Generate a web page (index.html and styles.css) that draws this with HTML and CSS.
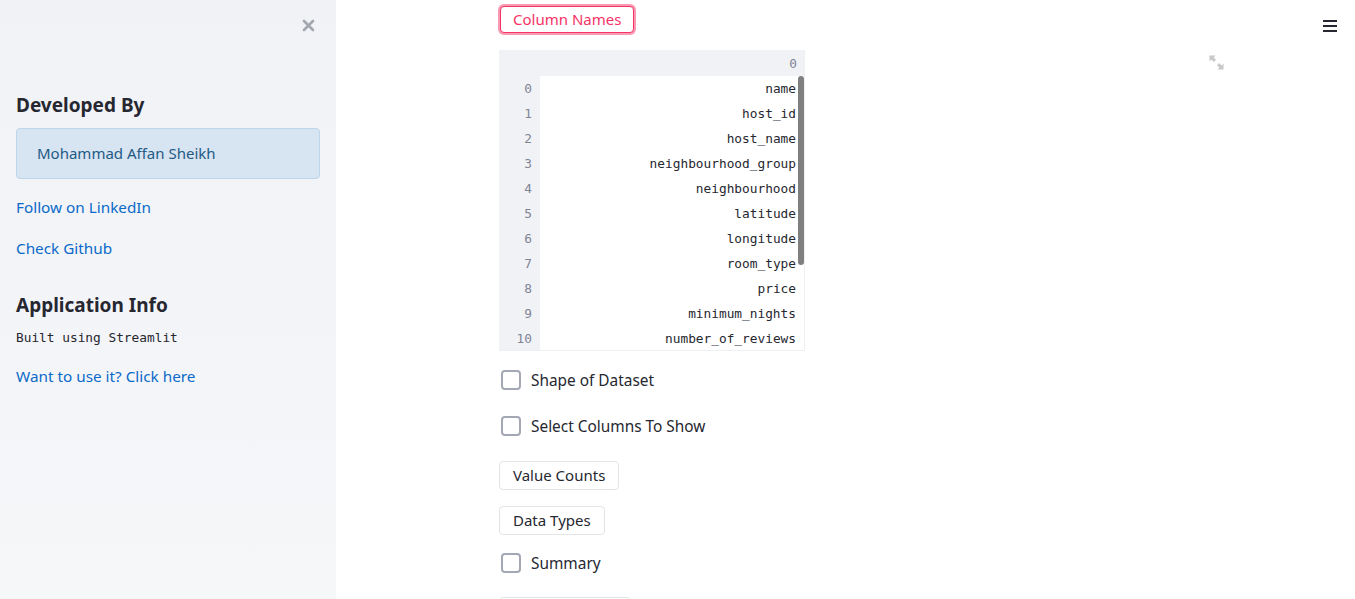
FILE: index.html
```html
<!DOCTYPE html>
<html>
<head>
<meta charset="utf-8">
<link rel="stylesheet" href="styles.css">
</head>
<body>
<div class="app">
  <aside class="sidebar">
    <div class="close-row">
      <svg class="close" width="13" height="13" viewBox="0 0 13 13"><path d="M2 2 L11 11 M11 2 L2 11" stroke="#a3a6ad" stroke-width="2.6" stroke-linecap="round"/></svg>
    </div>
    <h3 class="side-h">Developed By</h3>
    <div class="info">Mohammad Affan Sheikh</div>
    <a class="link l1" href="#">Follow on LinkedIn</a>
    <a class="link l2" href="#">Check Github</a>
    <h3 class="side-h h2">Application Info</h3>
    <div class="mono-line">Built using Streamlit</div>
    <a class="link l3" href="#">Want to use it? Click here</a>
  </aside>
  <main class="main">
    <div class="menu">
      <svg width="14" height="12" viewBox="0 0 14 12"><rect x="0" y="0" width="14" height="2" fill="#262730"/><rect x="0" y="5" width="14" height="2" fill="#262730"/><rect x="0" y="10" width="14" height="2" fill="#262730"/></svg>
    </div>
    <div class="block">
      <button class="btn btn-active">Column Names</button>
      <div class="table-wrap">
        <div class="table">
          <div class="hcell idx"></div><div class="hcell">0</div>
          <div class="idx">0</div><div class="cell">name</div>
          <div class="idx">1</div><div class="cell">host_id</div>
          <div class="idx">2</div><div class="cell">host_name</div>
          <div class="idx">3</div><div class="cell">neighbourhood_group</div>
          <div class="idx">4</div><div class="cell">neighbourhood</div>
          <div class="idx">5</div><div class="cell">latitude</div>
          <div class="idx">6</div><div class="cell">longitude</div>
          <div class="idx">7</div><div class="cell">room_type</div>
          <div class="idx">8</div><div class="cell">price</div>
          <div class="idx">9</div><div class="cell">minimum_nights</div>
          <div class="idx">10</div><div class="cell">number_of_reviews</div>
          <div class="scrollbar"></div>
        </div>
        <svg class="expand" width="15" height="15" viewBox="0 0 15 15"><path d="M0.5 0.5 L6.5 0.5 L4.6 2.4 L7 4.8 L4.8 7 L2.4 4.6 L0.5 6.5 Z" fill="#c8c8c8"/><path d="M14.5 14.5 L8.5 14.5 L10.4 12.6 L8 10.2 L10.2 8 L12.6 10.4 L14.5 8.5 Z" fill="#c8c8c8"/></svg>
      </div>
      <label class="check c1"><span class="box"></span><span>Shape of Dataset</span></label>
      <label class="check c2"><span class="box"></span><span>Select Columns To Show</span></label>
      <button class="btn b1">Value Counts</button>
      <button class="btn b2">Data Types</button>
      <label class="check c3"><span class="box"></span><span>Summary</span></label>
      <button class="btn b3" aria-label="more"></button>
    </div>
  </main>
</div>
</body>
</html>
```
FILE: styles.css
```css
* { box-sizing: border-box; }
html, body { margin: 0; padding: 0; height: 100%; overflow: hidden; }
body {
  font-family: "Noto Sans", "Open Sans", sans-serif;
  color: #262730;
  background: #fff;
}
.app { display: flex; height: 599px; }
.sidebar {
  width: 336px;
  flex: none;
  height: 599px;
  background: linear-gradient(180deg, #f0f2f6 0%, #f6f7f9 100%);
  padding: 0 16px;
  display: flex;
  flex-direction: column;
  align-items: flex-start;
}
.close-row { width: 100%; display: flex; justify-content: flex-end; padding: 19px 5px 0 0; height: 32px; }
.side-h {
  margin: 0;
  font-size: 19px;
  font-weight: 700;
  line-height: 26px;
  color: #262730;
}
.sidebar .side-h:first-of-type { margin-top: 60px; }
.info {
  margin-top: 10px;
  width: 304px;
  height: 51px;
  background: #d7e4f1;
  border: 1px solid #bdd6ee;
  border-radius: 4px;
  color: #1f5b86;
  font-size: 15px;
  line-height: 49px;
  padding-left: 20px;
}
.link {
  color: #0b6ac9;
  text-decoration: none;
  font-size: 15.3px;
  line-height: 22px;
}
.l1 { margin-top: 17px; }
.l2 { margin-top: 19px; }
.h2 { margin-top: 33px; }
.mono-line {
  margin-top: 11px;
  font-family: "DejaVu Sans Mono", "Liberation Mono", monospace;
  font-size: 12.8px;
  line-height: 18px;
  color: #262730;
}
.l3 { margin-top: 18px; }

.main { flex: 1; position: relative; }
.menu { position: absolute; top: 20px; right: 18px; line-height: 0; }
.block {
  width: 726px;
  margin-left: 163px;
  display: flex;
  flex-direction: column;
  align-items: flex-start;
}
.btn {
  font-family: "Noto Sans", "Open Sans", sans-serif;
  font-size: 15px;
  color: #262730;
  background: #fff;
  border: 1px solid #e3e4e8;
  border-radius: 4px;
  height: 29px;
  padding: 0 13px;
  line-height: 27px;
}
.btn-active {
  margin-top: 6px;
  margin-left: 1px;
  color: #f63366;
  border-color: #f63366;
  box-shadow: 0 0 0 2px rgba(246, 51, 102, 0.5);
  height: 27px;
  line-height: 25px;
  padding: 0 12px;
}
.table-wrap { margin-top: 17px; width: 726px; position: relative; }
.table {
  position: relative;
  width: 306px;
  display: grid;
  grid-template-columns: 41px 265px;
  grid-template-rows: 26px;
  grid-auto-rows: 25px;
  font-family: "DejaVu Sans Mono", "Liberation Mono", monospace;
  font-size: 12.8px;
  border-right: 1px solid #eeeff2;
  border-bottom: 1px solid #eeeff2;
  height: 301px;
  overflow: hidden;
}
.hcell { background: #f0f2f6; color: #808495; text-align: right; padding-right: 8px; line-height: 27px; }
.idx { background: #f0f2f6; color: #808495; text-align: right; padding-right: 8px; line-height: 26px; }
.cell { background: #fff; color: #262730; text-align: right; padding-right: 9px; line-height: 26px; }
.scrollbar {
  position: absolute;
  left: 299px;
  top: 26px;
  width: 6px;
  height: 189px;
  background: #7f7f7f;
  border-radius: 3px;
}
.expand { position: absolute; left: 710px; top: 5px; }
.check {
  display: flex;
  align-items: center;
  gap: 10px;
  height: 26px;
  font-size: 15.4px;
  color: #262730;
  padding-left: 2px;
}
.box {
  width: 20px;
  height: 20px;
  border: 2px solid #a3a8b4;
  border-radius: 4px;
  background: #fff;
}
.c1 { margin-top: 16px; }
.c2 { margin-top: 20px; }
.b1 { margin-top: 22px; }
.b2 { margin-top: 16px; }
.c3 { margin-top: 15px; }
.b3 { margin-top: 21px; width: 132px; }
```
